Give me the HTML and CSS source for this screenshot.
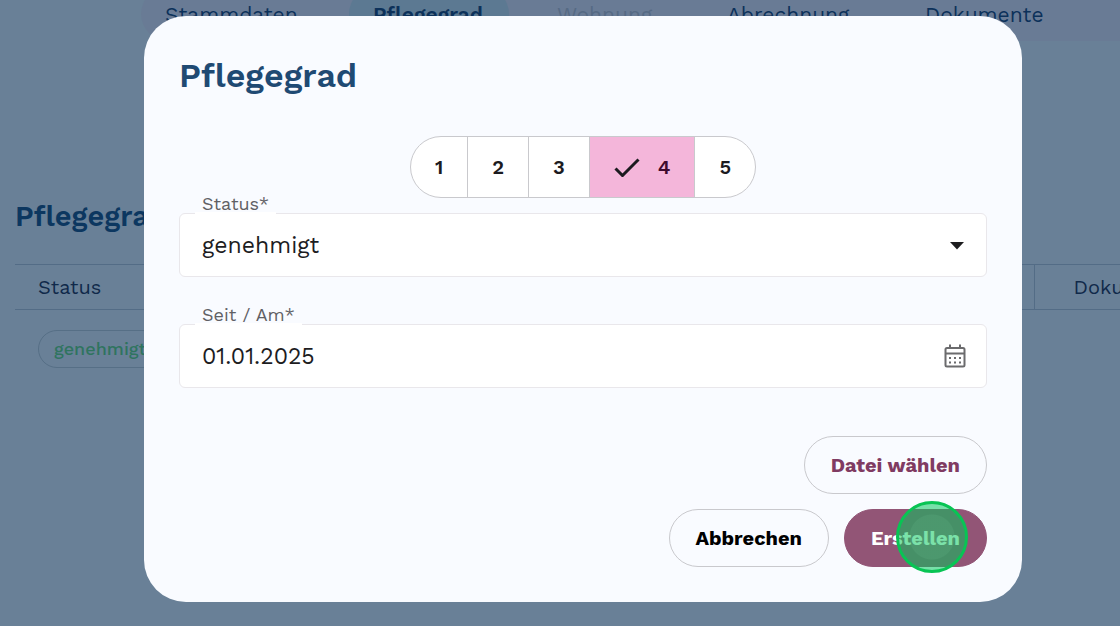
FILE: index.html
```html
<!DOCTYPE html>
<html lang="de">
<head>
    <meta charset="UTF-8">
    <meta name="viewport" content="width=device-width, initial-scale=1.0">
    <title>Pflegegrad</title>
    <link rel="stylesheet" href="styles.css">
</head>
<body>
    <nav class="tabs">
        <a href="#stammdaten">Stammdaten</a>
        <a href="#pflegegrad" class="active">Pflegegrad</a>
        <a href="#wohnung" class="disabled">Wohnung</a>
        <a href="#abrechnung">Abrechnung</a>
        <a href="#dokumente">Dokumente</a>
    </nav>

    <main class="page">
        <h2>Pflegegrad</h2>
        <table class="history">
            <thead>
                <tr>
                    <th>Status</th>
                    <th class="col-docs">Dokumente</th>
                </tr>
            </thead>
            <tbody>
                <tr>
                    <td><span class="chip">genehmigt</span></td>
                    <td></td>
                </tr>
            </tbody>
        </table>
    </main>

    <div class="backdrop">
        <form class="dialog" role="dialog" aria-labelledby="dialogTitle">
            <h1 id="dialogTitle">Pflegegrad</h1>

            <div class="segments" role="radiogroup" aria-labelledby="dialogTitle">
                <label><input type="radio" name="grad" value="1"><span>1</span></label>
                <label><input type="radio" name="grad" value="2"><span>2</span></label>
                <label><input type="radio" name="grad" value="3"><span>3</span></label>
                <label>
                    <input type="radio" name="grad" value="4" checked>
                    <svg class="check" viewBox="0 0 26 20" width="26" height="20"><path d="M1.5 11.5 8.5 18.5 24.5 2.5"/></svg>
                    <span>4</span>
                </label>
                <label><input type="radio" name="grad" value="5"><span>5</span></label>
            </div>

            <div class="field">
                <label for="status">Status*</label>
                <select id="status">
                    <option>genehmigt</option>
                </select>
                <svg class="arrow" viewBox="0 0 14 8" width="14" height="8"><path d="M0 0h14L7 7.5z"/></svg>
            </div>

            <div class="field">
                <label for="date">Seit / Am*</label>
                <input type="text" id="date" value="01.01.2025">
                <button type="button" class="calendar" aria-label="Kalender">
                    <svg viewBox="0 0 22 24" width="22" height="24">
                        <rect x="1.5" y="4" width="19" height="18.5" rx="1.5"/>
                        <path d="M1.5 9.5h19M6 .5v3.5M16 .5v3.5"/>
                        <path d="M5 14h2M10 14h2M15 14h2M5 18.5h2M10 18.5h2M15 18.5h2"/>
                    </svg>
                </button>
            </div>

            <div class="actions">
                <button type="button" class="btn upload">Datei wählen</button>
                <div class="actions-row">
                    <button type="button" class="btn">Abbrechen</button>
                    <button type="submit" class="btn primary">Erstellen<span class="pointer"></span></button>
                </div>
            </div>
        </form>
    </div>
</body>
</html>
```
FILE: styles.css
```css
:root {
    --page: #698097;
    --bar: #697b95;
    --navy: #0c3760;
    --line: #c9c9cd;
    --surface: #f9fbff;
    --berry: #925576;
}

* {
    margin: 0;
    padding: 0;
    box-sizing: border-box;
}

body {
    min-height: 100vh;
    background: var(--page);
    color: #10294a;
    font-family: "Work Sans", "Open Sans", sans-serif;
    font-size: 20px;
    overflow: hidden;
}

button, input, select {
    font: inherit;
    color: inherit;
}

/* page behind the dialog */

.tabs {
    display: grid;
    grid-template-columns: 184px 160px 146px 174px 172px;
    column-gap: 24px;
    height: 54px;
    margin: -13px 0 0 141px;
    background: var(--bar);
    border-radius: 27px 0 0 27px;
    font-size: 21px;
    white-space: nowrap;
}

.tabs a {
    padding: 0 24px;
    line-height: 56px;
    border-radius: 27px;
    color: #0c315a;
    text-decoration: none;
}

.tabs .active {
    background: #5c7992;
    font-weight: 600;
}

.tabs .disabled {
    color: #566a84;
}

.page {
    padding: 151px 0 0 15px;
}

h2 {
    font-size: 29px;
    font-weight: 600;
    line-height: 48px;
    color: var(--navy);
}

.history {
    width: 100%;
    margin-top: 24px;
    border-collapse: collapse;
    table-layout: fixed;
}

.history th {
    height: 45px;
    padding: 0 23px;
    border: solid #536c86;
    border-width: 1px 0;
    font-weight: 400;
    text-align: left;
}

.history .col-docs {
    width: 86px;
    padding: 0 0 0 39px;
    border-left-width: 1px;
}

.history td {
    padding: 20px 23px;
}

.chip {
    display: inline-block;
    padding: 0 15px;
    border: 1px solid #566f86;
    border-radius: 19px;
    color: #2f745f;
    font-size: 18px;
    font-weight: 500;
    line-height: 36px;
}

/* dialog */

.backdrop {
    position: fixed;
    inset: 0;
    padding: 16px 98px 24px 144px;
}

.dialog {
    display: flex;
    flex-direction: column;
    height: 100%;
    padding: 35px;
    background: var(--surface);
    border-radius: 42px;
}

h1 {
    font-size: 34px;
    font-weight: 600;
    line-height: 48px;
    color: #1f4a73;
}

.segments {
    display: flex;
    align-self: center;
    height: 62px;
    margin-top: 37px;
    background: #fff;
    border: 1px solid var(--line);
    border-radius: 31px;
    overflow: hidden;
}

.segments label {
    display: flex;
    align-items: center;
    gap: 18px;
    padding: 0 24px;
    color: #1c1b1f;
    font-weight: 600;
    cursor: pointer;
}

.segments label + label {
    border-left: 1px solid var(--line);
}

.segments input {
    position: absolute;
    opacity: 0;
}

.segments label:has(input:checked) {
    background: #f4b6da;
    color: #3e0a2d;
}

.check {
    fill: none;
    stroke: #1c1b1f;
    stroke-width: 3;
}

.field {
    position: relative;
    margin-top: 15px;
}

.field + .field {
    margin-top: 47px;
}

.field label {
    position: absolute;
    top: -20px;
    left: 16px;
    padding: 0 7px;
    background: linear-gradient(transparent 19px, #fff 19px);
    color: #606064;
    font-size: 18px;
    line-height: 22px;
}

.field select,
.field input {
    display: block;
    width: 100%;
    height: 64px;
    padding: 0 64px 0 22px;
    appearance: none;
    background: #fff;
    border: 1px solid #e9e7eb;
    border-radius: 6px;
    color: #1d1d1f;
    font-size: 23px;
}

.arrow {
    position: absolute;
    top: 29px;
    right: 23px;
    fill: #1d1d1f;
    pointer-events: none;
}

.calendar {
    position: absolute;
    top: 20px;
    right: 21px;
    height: 24px;
    background: none;
    border: none;
    cursor: pointer;
}

.calendar svg {
    display: block;
    fill: none;
    stroke: #6b6b6d;
    stroke-width: 2;
}

.actions {
    display: flex;
    flex-direction: column;
    align-items: flex-end;
    gap: 15px;
    margin-top: auto;
}

.actions-row {
    display: flex;
    gap: 15px;
}

.btn {
    position: relative;
    height: 58px;
    padding: 0 26px;
    background: transparent;
    border: 1px solid var(--line);
    border-radius: 29px;
    color: #000;
    font-weight: 700;
    cursor: pointer;
}

.upload {
    color: #803b62;
}

.primary {
    background: var(--berry);
    border-color: var(--berry);
    color: #fff;
}

/* click highlight over the submit button */
.pointer {
    position: absolute;
    top: -9px;
    right: 18px;
    width: 72px;
    height: 72px;
    border: 3px solid #08c454;
    border-radius: 50%;
    background: radial-gradient(circle, rgba(130, 220, 170, 0.1) 22px, transparent 23px), rgba(0, 200, 91, 0.52);
}
```
